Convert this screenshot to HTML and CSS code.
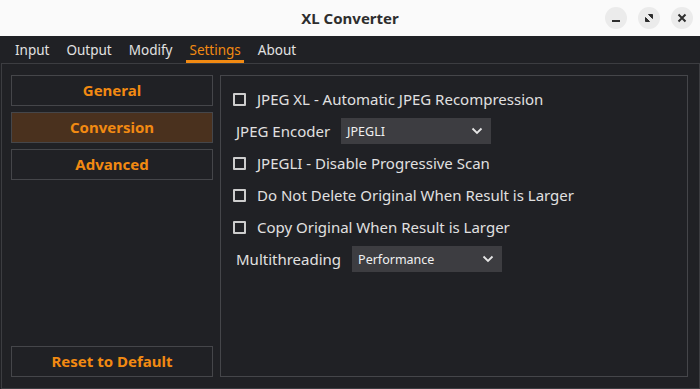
FILE: index.html
```html
<!DOCTYPE html>
<html>
<head>
<meta charset="utf-8">
<link rel="stylesheet" href="styles.css">
</head>
<body>
<div class="window">
  <header class="titlebar">
    <div class="title">XL Converter</div>
    <div class="controls">
      <span class="wbtn"><svg width="10" height="10" viewBox="0 0 10 10"><rect x="1" y="7" width="8" height="2" fill="#2e2e2e"/></svg></span>
      <span class="wbtn"><svg width="10" height="10" viewBox="0 0 10 10"><path d="M4.5 1.5H8.5V5.5Z" fill="#2e2e2e" stroke="#2e2e2e" stroke-width="1" stroke-linejoin="round"/><path d="M1.5 4.5V8.5H5.5Z" fill="#2e2e2e" stroke="#2e2e2e" stroke-width="1" stroke-linejoin="round"/></svg></span>
      <span class="wbtn"><svg width="10" height="10" viewBox="0 0 10 10"><path d="M1.5 1.5L8.5 8.5M8.5 1.5L1.5 8.5" stroke="#2e2e2e" stroke-width="2"/></svg></span>
    </div>
  </header>
  <nav class="tabs">
    <span class="tab">Input</span>
    <span class="tab">Output</span>
    <span class="tab">Modify</span>
    <span class="tab active">Settings</span>
    <span class="tab">About</span>
  </nav>
  <main class="pane">
    <aside class="sidebar">
      <div class="navbtn">General</div>
      <div class="navbtn selected">Conversion</div>
      <div class="navbtn">Advanced</div>
      <div class="navbtn reset">Reset to Default</div>
    </aside>
    <section class="panel">
      <div class="row"><span class="check"></span><span class="label">JPEG XL - Automatic JPEG Recompression</span></div>
      <div class="row field"><span class="flabel">JPEG Encoder</span><span class="combo">JPEGLI<svg class="chev" width="12" height="8" viewBox="0 0 12 8"><path d="M1.5 1.5L6 6L10.5 1.5" fill="none" stroke="#e6e6e6" stroke-width="1.8"/></svg></span></div>
      <div class="row"><span class="check"></span><span class="label">JPEGLI - Disable Progressive Scan</span></div>
      <div class="row"><span class="check"></span><span class="label">Do Not Delete Original When Result is Larger</span></div>
      <div class="row"><span class="check"></span><span class="label">Copy Original When Result is Larger</span></div>
      <div class="row field"><span class="flabel">Multithreading</span><span class="combo">Performance<svg class="chev" width="12" height="8" viewBox="0 0 12 8"><path d="M1.5 1.5L6 6L10.5 1.5" fill="none" stroke="#e6e6e6" stroke-width="1.8"/></svg></span></div>
    </section>
  </main>
</div>
</body>
</html>
```
FILE: styles.css
```css
* { box-sizing: border-box; }
html, body { margin: 0; padding: 0; }
body {
  width: 700px;
  height: 389px;
  overflow: hidden;
  background: #202125;
  font-family: "Noto Sans", "Open Sans", sans-serif;
  color: #dedede;
}
.window {
  display: flex;
  flex-direction: column;
  height: 389px;
}
.titlebar {
  height: 36px;
  background: #fafafa;
  position: relative;
  display: flex;
  align-items: center;
  justify-content: center;
}
.title {
  font-weight: bold;
  font-size: 15px;
  color: #2e2e2e;
}
.controls {
  position: absolute;
  right: 7px;
  top: 7px;
  display: flex;
  gap: 11px;
}
.wbtn {
  width: 22px;
  height: 22px;
  border-radius: 50%;
  background: #ebebeb;
  display: flex;
  align-items: center;
  justify-content: center;
}
.tabs {
  height: 27px;
  display: flex;
  gap: 11px;
  padding-left: 12px;
  background: #202125;
}
.tab {
  font-size: 13.5px;
  padding: 5px 3px 0;
  color: #e2e2e2;
  line-height: 19px;
  height: 27px;
}
.tab.active {
  color: #f28a12;
  border-bottom: 3px solid #f28a12;
}
.pane {
  flex: 1;
  margin-left: 1px;
  border: 1px solid #3c3d41;
  padding: 11px;
  padding-left: 9px;
  display: flex;
  gap: 7px;
}
.sidebar {
  width: 202px;
  display: flex;
  flex-direction: column;
  gap: 6px;
}
.navbtn {
  height: 31px;
  border: 1px solid #45464a;
  display: flex;
  align-items: center;
  justify-content: center;
  padding-bottom: 2px;
  font-weight: bold;
  font-size: 15px;
  color: #f28a12;
}
.navbtn.selected {
  background: #4a311e;
}
.navbtn.reset {
  margin-top: auto;
}
.panel {
  flex: 1;
  border: 1px solid #45464a;
  padding: 7px 0 0 12px;
  display: flex;
  flex-direction: column;
}
.row {
  height: 32px;
  display: flex;
  align-items: center;
  font-size: 15px;
}
.check {
  width: 13px;
  height: 13px;
  border: 2px solid #cdcdcd;
  border-radius: 1px;
  margin-right: 11px;
}
.label { color: #e0e0e0; }
.field { padding-left: 3px; }
.flabel {
  color: #e0e0e0;
  margin-right: 11px;
}
.combo {
  width: 150px;
  height: 26px;
  background: #3d3d41;
  font-size: 12.5px;
  color: #f0f0f0;
  padding-left: 6px;
  display: flex;
  align-items: center;
  justify-content: space-between;
  padding-right: 8px;
}
```
